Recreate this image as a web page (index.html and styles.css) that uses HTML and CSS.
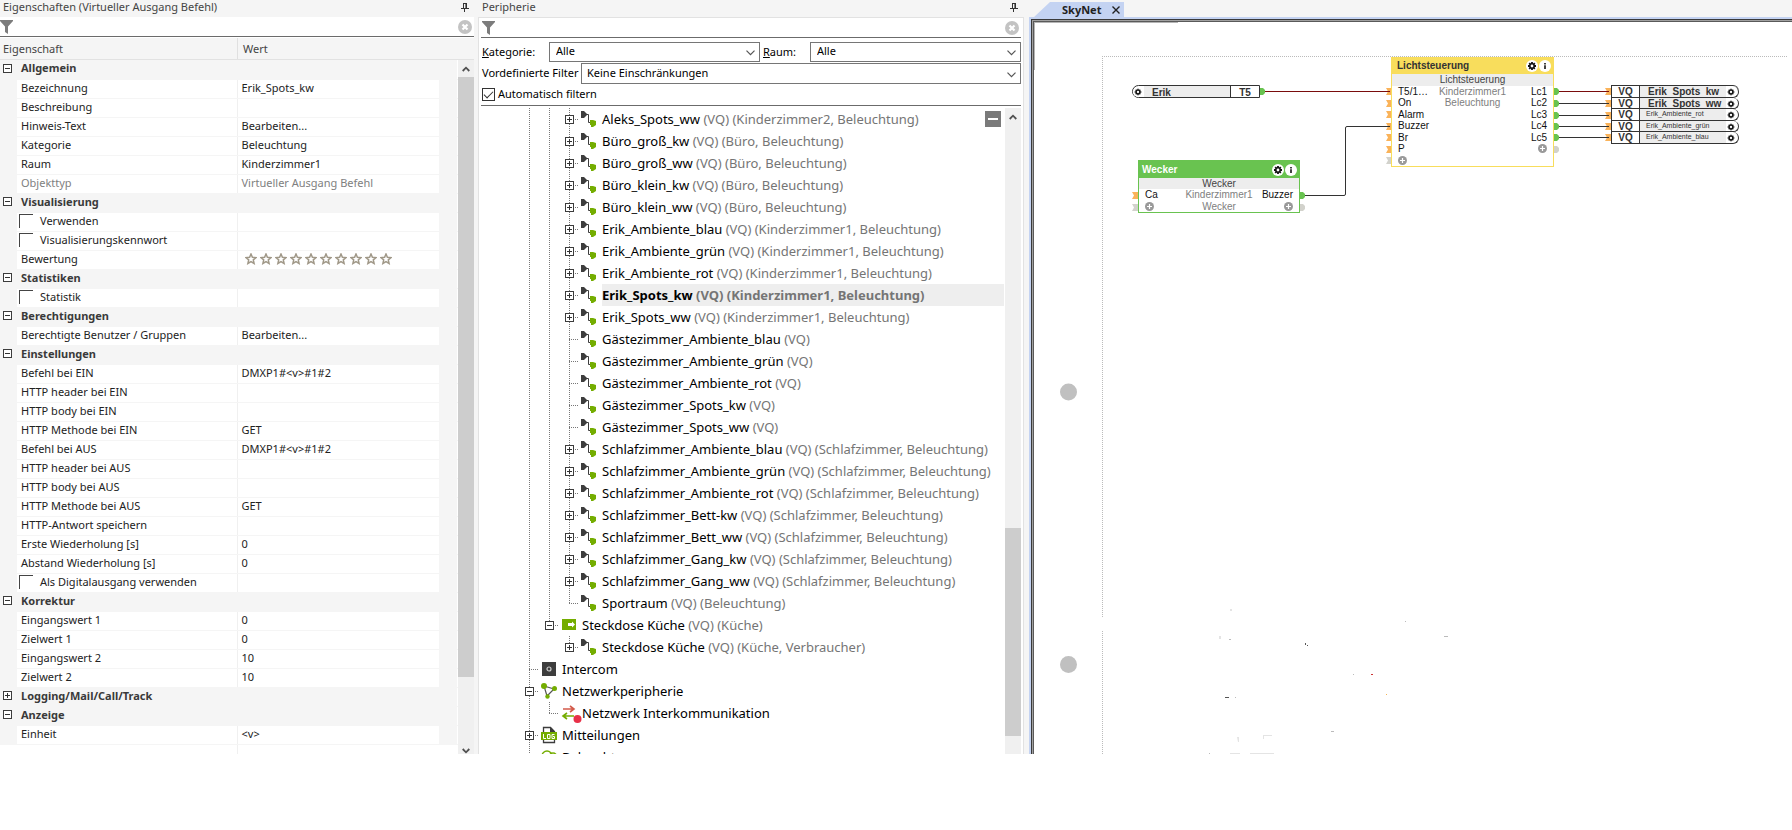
FILE: index.html
```html
<!DOCTYPE html>
<html lang="de">
<head>
<meta charset="utf-8">
<title>SkyNet</title>
<link rel="stylesheet" href="styles.css">
</head>
<body>
<svg class="sprite" aria-hidden="true">
  <symbol id="pin" viewBox="0 0 8 9"><path d="M2 .5h4M2.5 0v5M5.5 0v5M4.9 0v5M0 5.5h8M3.5 6v3" fill="none" stroke="#333"/></symbol>
  <symbol id="funnel" viewBox="0 0 13 14"><path d="M0 0h13v1L8 6.500V14L5 12V6.500L0 1z" fill="#7c7c7c"/></symbol>
  <symbol id="clear" viewBox="0 0 14 14"><circle cx="7" cy="7" r="7" fill="#c3c3c3"/><path d="M4.500 4.500l5 5M9.500 4.500l-5 5" stroke="#fff" stroke-width="2.200"/></symbol>
  <symbol id="star" viewBox="0 0 12 12"><path d="M6 1l1.400 3.300 3.600.3-2.700 2.300.8 3.600L6 8.600l-3.100 1.900.8-3.600L1 4.600l3.600-.3z" fill="#fff" stroke="#a09888" stroke-width="1.500"/></symbol>
  <symbol id="up" viewBox="0 0 8 6"><path d="M.7 5L4 1.700 7.300 5" fill="none" stroke="#505050" stroke-width="1.800"/></symbol>
  <symbol id="down" viewBox="0 0 8 6"><path d="M.7 1L4 4.300 7.300 1" fill="none" stroke="#505050" stroke-width="1.800"/></symbol>
  <symbol id="chev" viewBox="0 0 9 6"><path d="M.5.7l4 4 4-4" fill="none" stroke="#555" stroke-width="1.200"/></symbol>
  <symbol id="vq" viewBox="0 0 20 20"><path d="M2 2h3l3 3v1L5 9H2z" fill="#3d3d3d"/><path d="M8 5.500h1.500v8H12" fill="none" stroke="#3d3d3d"/><path d="M11 11h3l3 1v4l-3 2h-2v-2h-1z" fill="#74ad00"/></symbol>
  <symbol id="box" viewBox="0 0 20 20"><path d="M3 4h14v11H3z" fill="#74ad00"/><path d="M9 8h4V6.500l3 3-3 3V11H9z" fill="#fff"/></symbol>
  <symbol id="intercom" viewBox="0 0 20 20"><path d="M3 3h14v14H3z" fill="#3d3d3d"/><circle cx="10" cy="10" r="2" fill="none" stroke="#ccc" stroke-width="1.200"/></symbol>
  <symbol id="net" viewBox="0 0 20 20"><path d="M5 5l10 3-7 7z" fill="none" stroke="#555" stroke-width="1.200"/><circle cx="5" cy="5" r="3" fill="#74ad00"/><circle cx="15.500" cy="7.500" r="2.500" fill="#74ad00"/><circle cx="8.500" cy="15.500" r="2.200" fill="#74ad00"/></symbol>
  <symbol id="swap" viewBox="0 0 24 20"><path d="M4 6h10M11 3l4 3-4 3" fill="none" stroke="#d35b4b" stroke-width="1.600"/><path d="M15 13H5M8 10l-4 3 4 3" fill="none" stroke="#74ad00" stroke-width="1.600"/><circle cx="18.500" cy="16" r="4" fill="#e83048"/></symbol>
  <symbol id="log" viewBox="0 0 20 20"><path d="M4.500 17.500v-15h7l4 4v11z" fill="#fff" stroke="#3d3d3d" stroke-width="1.300"/><path d="M11 2v5h5z" fill="#3d3d3d"/><path d="M2 7h16v8H2z" fill="#74ad00"/><path d="M4.500 9v4.500H7M8.500 9.500H11v4H8.500zM15.500 9.500H13v4h2.500v-2H14" fill="none" stroke="#fff"/></symbol>
  <symbol id="bulb" viewBox="0 0 20 20"><circle cx="8" cy="9" r="5" fill="none" stroke="#74ad00" stroke-width="1.400"/><circle cx="14" cy="10" r="4" fill="none" stroke="#74ad00" stroke-width="1.400"/></symbol>
  <symbol id="gear" viewBox="0 0 12 12"><circle cx="6" cy="6" r="6" fill="#fff"/><path d="M6 2v8M2 6h8M3.200 3.200l5.600 5.600M8.800 3.200L3.200 8.800" stroke="#111" stroke-width="1.800"/><circle cx="6" cy="6" r="2.700" fill="#111"/><circle cx="6" cy="6" r="1.400" fill="#fff"/></symbol>
  <symbol id="info" viewBox="0 0 12 12"><circle cx="6" cy="6" r="6" fill="#fff"/><path d="M6 3v1.500M6 5.200V9" stroke="#222" stroke-width="1.700"/></symbol>
  <symbol id="add" viewBox="0 0 9 9"><circle cx="4.500" cy="4.500" r="4.500" fill="#999"/><path d="M4.500 2v5M2 4.500h5" stroke="#fff" stroke-width="1.200"/></symbol>
  <symbol id="in" viewBox="0 0 7 7"><path d="M0 0h7v7H0l2-3.500z"/></symbol>
  <symbol id="out" viewBox="0 0 5 7"><path d="M0 0h3l2 2v3L3 7H0z"/></symbol>
</svg>

<main class="app">
  <section class="panel props">
    <header class="title"><h2>Eigenschaften (Virtueller Ausgang Befehl)</h2><button class="icon-btn" aria-label="Anheften"><svg width="8" height="9"><use href="#pin"/></svg></button></header>
    <div class="search"><svg width="13" height="14"><use href="#funnel"/></svg><input type="text" aria-label="Eigenschaften filtern"><button class="icon-btn" aria-label="Filter leeren"><svg width="14" height="14"><use href="#clear"/></svg></button></div>
    <div class="colhead"><span>Eigenschaft</span><span>Wert</span></div>
    <div class="props-body">
      <table class="grid">
        <colgroup><col class="c-gutter"><col class="c-name"><col class="c-value"><col></colgroup>
        <tbody>
        <tr class="cat"><td><button class="exp" aria-label="Allgemein"></button></td><th colspan="3">Allgemein</th></tr>
        <tr><td></td><td>Bezeichnung</td><td>Erik_Spots_kw</td><td></td></tr>
        <tr><td></td><td>Beschreibung</td><td></td><td></td></tr>
        <tr><td></td><td>Hinweis-Text</td><td>Bearbeiten...</td><td></td></tr>
        <tr><td></td><td>Kategorie</td><td>Beleuchtung</td><td></td></tr>
        <tr><td></td><td>Raum</td><td>Kinderzimmer1</td><td></td></tr>
        <tr class="ro"><td></td><td>Objekttyp</td><td>Virtueller Ausgang Befehl</td><td></td></tr>
        <tr class="cat"><td><button class="exp" aria-label="Visualisierung"></button></td><th colspan="3">Visualisierung</th></tr>
        <tr><td></td><td><label class="flag"><input type="checkbox">Verwenden</label></td><td></td><td></td></tr>
        <tr><td></td><td><label class="flag"><input type="checkbox">Visualisierungskennwort</label></td><td></td><td></td></tr>
        <tr><td></td><td>Bewertung</td><td><span class="stars"><svg><use href="#star"/></svg><svg><use href="#star"/></svg><svg><use href="#star"/></svg><svg><use href="#star"/></svg><svg><use href="#star"/></svg><svg><use href="#star"/></svg><svg><use href="#star"/></svg><svg><use href="#star"/></svg><svg><use href="#star"/></svg><svg><use href="#star"/></svg></span></td><td></td></tr>
        <tr class="cat"><td><button class="exp" aria-label="Statistiken"></button></td><th colspan="3">Statistiken</th></tr>
        <tr><td></td><td><label class="flag"><input type="checkbox">Statistik</label></td><td></td><td></td></tr>
        <tr class="cat"><td><button class="exp" aria-label="Berechtigungen"></button></td><th colspan="3">Berechtigungen</th></tr>
        <tr><td></td><td>Berechtigte Benutzer / Gruppen</td><td>Bearbeiten...</td><td></td></tr>
        <tr class="cat"><td><button class="exp" aria-label="Einstellungen"></button></td><th colspan="3">Einstellungen</th></tr>
        <tr><td></td><td>Befehl bei EIN</td><td>DMXP1#&lt;v&gt;#1#2</td><td></td></tr>
        <tr><td></td><td>HTTP header bei EIN</td><td></td><td></td></tr>
        <tr><td></td><td>HTTP body bei EIN</td><td></td><td></td></tr>
        <tr><td></td><td>HTTP Methode bei EIN</td><td>GET</td><td></td></tr>
        <tr><td></td><td>Befehl bei AUS</td><td>DMXP1#&lt;v&gt;#1#2</td><td></td></tr>
        <tr><td></td><td>HTTP header bei AUS</td><td></td><td></td></tr>
        <tr><td></td><td>HTTP body bei AUS</td><td></td><td></td></tr>
        <tr><td></td><td>HTTP Methode bei AUS</td><td>GET</td><td></td></tr>
        <tr><td></td><td>HTTP-Antwort speichern</td><td></td><td></td></tr>
        <tr><td></td><td>Erste Wiederholung [s]</td><td>0</td><td></td></tr>
        <tr><td></td><td>Abstand Wiederholung [s]</td><td>0</td><td></td></tr>
        <tr><td></td><td><label class="flag"><input type="checkbox">Als Digitalausgang verwenden</label></td><td></td><td></td></tr>
        <tr class="cat"><td><button class="exp" aria-label="Korrektur"></button></td><th colspan="3">Korrektur</th></tr>
        <tr><td></td><td>Eingangswert 1</td><td>0</td><td></td></tr>
        <tr><td></td><td>Zielwert 1</td><td>0</td><td></td></tr>
        <tr><td></td><td>Eingangswert 2</td><td>10</td><td></td></tr>
        <tr><td></td><td>Zielwert 2</td><td>10</td><td></td></tr>
        <tr class="cat"><td><button class="exp plus" aria-label="Logging/Mail/Call/Track"></button></td><th colspan="3">Logging/Mail/Call/Track</th></tr>
        <tr class="cat"><td><button class="exp" aria-label="Anzeige"></button></td><th colspan="3">Anzeige</th></tr>
        <tr><td></td><td>Einheit</td><td>&lt;v&gt;</td><td></td></tr>
        <tr class="blank"><td></td><td></td><td></td><td></td></tr>
        </tbody>
      </table>
      <div class="scroll"><svg class="arrow" width="8" height="6"><use href="#up"/></svg><div class="track"><div class="thumb thumb-props"></div></div><svg class="arrow-end" width="8" height="6"><use href="#down"/></svg></div>
    </div>
  </section>

  <section class="panel periph">
    <header class="title"><h2>Peripherie</h2><button class="icon-btn" aria-label="Anheften"><svg width="8" height="9"><use href="#pin"/></svg></button></header>
    <div class="periph-body">
      <div class="search"><svg width="13" height="14"><use href="#funnel"/></svg><input type="text" aria-label="Peripherie filtern"><button class="icon-btn" aria-label="Filter leeren"><svg width="14" height="14"><use href="#clear"/></svg></button></div>
      <div class="filters">
        <div class="frow"><label class="lab-kat" for="kat"><u>K</u>ategorie:</label><span class="drop"><select id="kat"><option>Alle</option></select><svg width="9" height="6"><use href="#chev"/></svg></span><label class="lab-raum" for="raum"><u>R</u>aum:</label><span class="drop"><select id="raum"><option>Alle</option></select><svg width="9" height="6"><use href="#chev"/></svg></span></div>
        <div class="frow"><label class="lab-vor" for="vor">Vordefinierte Filter</label><span class="drop tall"><select id="vor"><option>Keine Einschränkungen</option></select><svg width="9" height="6"><use href="#chev"/></svg></span></div>
        <label class="auto"><input type="checkbox" checked>Automatisch filtern</label>
      </div>
      <div class="tree-area">
        <ul class="tree">
          <li><i class="v"></i><i class="v"></i><i class="v h"><button class="exp plus"></button></i><svg><use href="#vq"/></svg><span>Aleks_Spots_ww <em>(VQ) (Kinderzimmer2, Beleuchtung)</em></span></li>
          <li><i class="v"></i><i class="v"></i><i class="v h"><button class="exp plus"></button></i><svg><use href="#vq"/></svg><span>Büro_groß_kw <em>(VQ) (Büro, Beleuchtung)</em></span></li>
          <li><i class="v"></i><i class="v"></i><i class="v h"><button class="exp plus"></button></i><svg><use href="#vq"/></svg><span>Büro_groß_ww <em>(VQ) (Büro, Beleuchtung)</em></span></li>
          <li><i class="v"></i><i class="v"></i><i class="v h"><button class="exp plus"></button></i><svg><use href="#vq"/></svg><span>Büro_klein_kw <em>(VQ) (Büro, Beleuchtung)</em></span></li>
          <li><i class="v"></i><i class="v"></i><i class="v h"><button class="exp plus"></button></i><svg><use href="#vq"/></svg><span>Büro_klein_ww <em>(VQ) (Büro, Beleuchtung)</em></span></li>
          <li><i class="v"></i><i class="v"></i><i class="v h"><button class="exp plus"></button></i><svg><use href="#vq"/></svg><span>Erik_Ambiente_blau <em>(VQ) (Kinderzimmer1, Beleuchtung)</em></span></li>
          <li><i class="v"></i><i class="v"></i><i class="v h"><button class="exp plus"></button></i><svg><use href="#vq"/></svg><span>Erik_Ambiente_grün <em>(VQ) (Kinderzimmer1, Beleuchtung)</em></span></li>
          <li><i class="v"></i><i class="v"></i><i class="v h"><button class="exp plus"></button></i><svg><use href="#vq"/></svg><span>Erik_Ambiente_rot <em>(VQ) (Kinderzimmer1, Beleuchtung)</em></span></li>
          <li class="sel"><i class="v"></i><i class="v"></i><i class="v h"><button class="exp plus"></button></i><svg><use href="#vq"/></svg><span>Erik_Spots_kw <em>(VQ) (Kinderzimmer1, Beleuchtung)</em></span></li>
          <li><i class="v"></i><i class="v"></i><i class="v h"><button class="exp plus"></button></i><svg><use href="#vq"/></svg><span>Erik_Spots_ww <em>(VQ) (Kinderzimmer1, Beleuchtung)</em></span></li>
          <li><i class="v"></i><i class="v"></i><i class="v h"></i><svg><use href="#vq"/></svg><span>Gästezimmer_Ambiente_blau <em>(VQ)</em></span></li>
          <li><i class="v"></i><i class="v"></i><i class="v h"></i><svg><use href="#vq"/></svg><span>Gästezimmer_Ambiente_grün <em>(VQ)</em></span></li>
          <li><i class="v"></i><i class="v"></i><i class="v h"></i><svg><use href="#vq"/></svg><span>Gästezimmer_Ambiente_rot <em>(VQ)</em></span></li>
          <li><i class="v"></i><i class="v"></i><i class="v h"></i><svg><use href="#vq"/></svg><span>Gästezimmer_Spots_kw <em>(VQ)</em></span></li>
          <li><i class="v"></i><i class="v"></i><i class="v h"></i><svg><use href="#vq"/></svg><span>Gästezimmer_Spots_ww <em>(VQ)</em></span></li>
          <li><i class="v"></i><i class="v"></i><i class="v h"><button class="exp plus"></button></i><svg><use href="#vq"/></svg><span>Schlafzimmer_Ambiente_blau <em>(VQ) (Schlafzimmer, Beleuchtung)</em></span></li>
          <li><i class="v"></i><i class="v"></i><i class="v h"><button class="exp plus"></button></i><svg><use href="#vq"/></svg><span>Schlafzimmer_Ambiente_grün <em>(VQ) (Schlafzimmer, Beleuchtung)</em></span></li>
          <li><i class="v"></i><i class="v"></i><i class="v h"><button class="exp plus"></button></i><svg><use href="#vq"/></svg><span>Schlafzimmer_Ambiente_rot <em>(VQ) (Schlafzimmer, Beleuchtung)</em></span></li>
          <li><i class="v"></i><i class="v"></i><i class="v h"><button class="exp plus"></button></i><svg><use href="#vq"/></svg><span>Schlafzimmer_Bett-kw <em>(VQ) (Schlafzimmer, Beleuchtung)</em></span></li>
          <li><i class="v"></i><i class="v"></i><i class="v h"><button class="exp plus"></button></i><svg><use href="#vq"/></svg><span>Schlafzimmer_Bett_ww <em>(VQ) (Schlafzimmer, Beleuchtung)</em></span></li>
          <li><i class="v"></i><i class="v"></i><i class="v h"><button class="exp plus"></button></i><svg><use href="#vq"/></svg><span>Schlafzimmer_Gang_kw <em>(VQ) (Schlafzimmer, Beleuchtung)</em></span></li>
          <li><i class="v"></i><i class="v"></i><i class="v h"><button class="exp plus"></button></i><svg><use href="#vq"/></svg><span>Schlafzimmer_Gang_ww <em>(VQ) (Schlafzimmer, Beleuchtung)</em></span></li>
          <li><i class="v"></i><i class="v"></i><i class="v h last"></i><svg><use href="#vq"/></svg><span>Sportraum <em>(VQ) (Beleuchtung)</em></span></li>
          <li><i class="v"></i><i class="v h last"><button class="exp"></button></i><svg><use href="#box"/></svg><span>Steckdose Küche <em>(VQ) (Küche)</em></span></li>
          <li><i class="v"></i><i></i><i class="v h last"><button class="exp plus"></button></i><svg><use href="#vq"/></svg><span>Steckdose Küche <em>(VQ) (Küche, Verbraucher)</em></span></li>
          <li><i class="v h"></i><svg><use href="#intercom"/></svg><span>Intercom</span></li>
          <li><i class="v h"><button class="exp"></button></i><svg><use href="#net"/></svg><span>Netzwerkperipherie</span></li>
          <li><i class="v"></i><i class="v h last"></i><svg><use href="#swap" width="24"/></svg><span>Netzwerk Interkommunikation</span></li>
          <li><i class="v h"><button class="exp plus"></button></i><svg><use href="#log"/></svg><span>Mitteilungen</span></li>
          <li><i class="v"></i><svg><use href="#bulb"/></svg><span>Beleuchtung</span></li>
        </ul>
        <button class="collapse" aria-label="Alle zuklappen"></button>
        <div class="scroll"><svg class="arrow" width="8" height="6"><use href="#up"/></svg><div class="track"><div class="thumb thumb-tree"></div></div></div>
      </div>
    </div>
  </section>

  <section class="editor">
    <div class="tabs"><div class="tab"><span>SkyNet</span><button class="icon-btn" aria-label="Schließen"><svg width="8" height="8" viewBox="0 0 8 8"><path d="M.5.5l7 7M7.500.5l-7 7" stroke="#222" stroke-width="1.400"/></svg></button></div></div>
    <div class="frame"><div class="canvas">
      <svg class="wires" width="758" height="732" viewBox="1034 22 758 732">
        <path d="M1034 22.500h144M1034.500 22v48" stroke="#b5b5b5"/>
        <path d="M1102.500 56v562M1102.500 631v123M1102 56.500h686" stroke="#bbb" stroke-dasharray="1 1" fill="none"/>
        <g fill="#c0c0c0"><circle cx="1068.500" cy="392" r="8.500"/><circle cx="1068.500" cy="664.500" r="8.500"/></g>
        <g stroke-width="1" fill="none" stroke="#333"><path d="M1304 195.500h40q1.500 0 1.500-1.500v-66q0-1.500 1.500-1.500h42"/><path d="M1559 103.500h50M1559 115.500h50M1559 126.500h50M1559 137.500h50"/><path stroke="#7a0c0c" d="M1265 91.500h124M1559 91.500h50"/></g>
        <g fill="#555"><path d="M1225 697h4v1h-4zM1305 643h1v2h-1zM1307 645h1v1h-1z"/><path fill="#c33" d="M1371 674h2v1h-2z"/><path fill="#f5b555" d="M1386 694h1v1h-1z"/><path fill="#bbb" d="M1229 639h2v1h-2zM1331 731h3v1h-3zM1235 697h1v1h-1zM1353 674h1v1h-1zM1405 621h1v1h-1zM1209 753h1v1h-1zM1444 636h4v1h-4z"/><path fill="#e4e4e4" d="M1263 735h9v1h-8v3h-1zM1237 737h2v5h-1zM1250 753h24v1h-24zM1230 753h10v1h-10zM1230 609h2v2h-2zM1219 636h2v3h-2z"/></g>
        <g fill="#fab35a"><use href="#in" x="1386" y="88" width="7" height="7"/><use href="#in" x="1386" y="100" width="7" height="7"/><use href="#in" x="1386" y="111" width="7" height="7"/><use href="#in" x="1386" y="123" width="7" height="7"/><use href="#in" x="1386" y="134" width="7" height="7"/><use href="#in" x="1386" y="146" width="7" height="7"/><use href="#in" x="1132" y="192" width="7" height="7"/><use href="#in" x="1605" y="88" width="7" height="7"/><use href="#in" x="1605" y="100" width="7" height="7"/><use href="#in" x="1605" y="112" width="7" height="7"/><use href="#in" x="1605" y="123" width="7" height="7"/><use href="#in" x="1605" y="134" width="7" height="7"/></g>
        <path d="M1386 91.500h4M1605 91.500h4" stroke="#7a0c0c"/><path d="M1386 126.500h4M1605 103.500h4M1605 115.500h4M1605 126.500h4M1605 137.500h4" stroke="#333"/>
        <g fill="#d2d2cc"><use href="#in" x="1386" y="157" width="7" height="7"/><use href="#in" x="1132" y="204" width="7" height="7"/><use href="#out" x="1554" y="146" width="5" height="7"/><use href="#out" x="1300" y="204" width="5" height="7"/></g>
        <g fill="#69c350"><use href="#out" x="1260" y="88" width="5" height="7"/><use href="#out" x="1300" y="192" width="5" height="7"/><use href="#out" x="1554" y="88" width="5" height="7"/><use href="#out" x="1554" y="100" width="5" height="7"/><use href="#out" x="1554" y="112" width="5" height="7"/><use href="#out" x="1554" y="123" width="5" height="7"/><use href="#out" x="1554" y="134" width="5" height="7"/></g>
      </svg>
      <div class="input-ref"><svg width="10" height="10"><use href="#gear"/></svg><b>Erik</b><strong>T5</strong></div>
      <article class="block wecker">
        <header><h3>Wecker</h3><svg width="12" height="12"><use href="#gear"/></svg><svg width="12" height="12"><use href="#info"/></svg></header>
        <div class="io io-3">
          <p class="name">Wecker</p>
          <span>Ca</span><span class="mid">Kinderzimmer1</span><span class="r">Buzzer</span>
          <span><svg width="9" height="9"><use href="#add"/></svg></span><span class="mid">Wecker</span><span class="r"><svg width="9" height="9"><use href="#add"/></svg></span>
        </div>
      </article>
      <article class="block licht">
        <header><h3>Lichtsteuerung</h3><svg width="12" height="12"><use href="#gear"/></svg><svg width="12" height="12"><use href="#info"/></svg></header>
        <div class="io io-8">
          <p class="name">Lichtsteuerung</p>
          <span>T5/1…</span><span class="mid">Kinderzimmer1</span><span class="r">Lc1</span>
          <span>On</span><span class="mid">Beleuchtung</span><span class="r">Lc2</span>
          <span>Alarm</span><span></span><span class="r">Lc3</span>
          <span>Buzzer</span><span></span><span class="r">Lc4</span>
          <span>Br</span><span></span><span class="r">Lc5</span>
          <span>P</span><span></span><span class="r"><svg width="9" height="9"><use href="#add"/></svg></span>
          <span><svg width="9" height="9"><use href="#add"/></svg></span><span></span><span></span>
        </div>
      </article>
      <ul class="outputs">
        <li><strong>VQ</strong><b>Erik&nbsp; Spots&nbsp; kw</b><svg width="10" height="10"><use href="#gear"/></svg></li>
        <li><strong>VQ</strong><b>Erik&nbsp; Spots&nbsp; ww</b><svg width="10" height="10"><use href="#gear"/></svg></li>
        <li><strong>VQ</strong><small>Erik_Ambiente_rot</small><svg width="10" height="10"><use href="#gear"/></svg></li>
        <li><strong>VQ</strong><small>Erik_Ambiente_grün</small><svg width="10" height="10"><use href="#gear"/></svg></li>
        <li><strong>VQ</strong><small>Erik_Ambiente_blau</small><svg width="10" height="10"><use href="#gear"/></svg></li>
      </ul>
    </div></div>
  </section>
</main>
</body>
</html>
```
FILE: styles.css
```css
* { box-sizing: border-box; }
body {
  margin: 0;
  height: 100vh;
  padding-bottom: 76px;
  overflow: hidden;
  background: #fff;
  color: #222;
  font: 11px/18px "Noto Sans", "Open Sans", sans-serif;
}
h2, h3, p, ul { margin: 0; padding: 0; font-size: inherit; font-weight: normal; list-style: none; }
button, input, select { font: inherit; color: inherit; margin: 0; padding: 0; border: 0; background: none; border-radius: 0; }
.sprite { position: absolute; width: 0; height: 0; }
svg { display: block; flex: none; }

.app { display: grid; grid-template-columns: 478px 551px minmax(0, 1fr); height: 100%; overflow: hidden; }
.panel { display: flex; flex-direction: column; min-width: 0; min-height: 0; background: #f5f5f5; }
.title { display: flex; align-items: center; justify-content: space-between; height: 17px; padding: 0 9px 3px 3px; line-height: 14px; color: #444; flex: none; }
.icon-btn { display: block; flex: none; }
.search { display: flex; align-items: center; height: 20px; background: #fff; border-bottom: 1px solid #6b6b6b; flex: none; }
.search input { flex: 1; min-width: 0; height: 18px; outline: 0; }

/* properties */
.props > .search { margin-right: 4px; padding-right: 2px; }
.colhead { display: grid; grid-template-columns: 238px 1fr; height: 23px; margin: 0 4px 0 0; border-top: 1px solid #fff; border-bottom: 1px solid #e2e2e2; line-height: 21px; color: #444; flex: none; }
.colhead span { padding-left: 3px; }
.colhead span:first-child { border-right: 1px solid #e0e0e0; }
.colhead span:last-child { padding-left: 5px; }
.props-body { display: flex; flex: 1; min-height: 0; overflow: hidden; margin-right: 4px; }
.grid { flex: 1; table-layout: fixed; border-collapse: collapse; border-right: 1px solid #fff; align-self: flex-start; }
.c-gutter { width: 17px; }
.c-name { width: 220px; }
.c-value { width: 202px; }
.grid tr { height: 19px; }
.grid td, .grid th { padding: 0 0 2px 4px; height: 19px; line-height: 16px; text-align: left; white-space: nowrap; border-bottom: 1px solid #f5f5f5; }
.grid td:first-child { padding-left: 3px; }
.grid td:nth-child(2), .grid td:nth-child(3) { background: #fff; }
.grid td:nth-child(2) { border-right: 1px solid #f0f0f0; }
.grid .ro td { color: #808080; }
.grid .cat th { color: #3a3a3a; font-weight: bold; }
.grid .blank td { background: #fff; }
.exp { position: relative; display: block; width: 9px; height: 9px; border: 1px solid #3c3c3c; background: linear-gradient(#333, #333) center / 5px 1px no-repeat #fff; }
.exp.plus { background: linear-gradient(#333, #333) center / 5px 1px no-repeat, linear-gradient(#333, #333) center / 1px 5px no-repeat #fff; }
.flag { display: flex; align-items: center; margin-left: -2px; height: 16px; }
.flag input { appearance: none; width: 14px; height: 14px; margin-right: 7px; border: solid #444; border-width: 1px 0 0 1px; }
.stars { display: flex; gap: 3px; padding-left: 3px; }
.stars svg { width: 12px; height: 12px; }

.scroll { display: flex; flex-direction: column; width: 16px; background: #f0f0f0; flex: none; overflow: hidden; }
.arrow { margin: 6px 4px 5px; }
.arrow-end { margin: 4px 4px 0; }
.track { flex: 1; display: flex; flex-direction: column; }
.thumb { background: #cdcdcd; }
.thumb-props { height: 90%; }
.thumb-tree { height: 33%; margin-top: auto; margin-bottom: 18px; }

/* periphery */
.periph .title { padding: 0 11px 3px 4px; }
.periph-body { display: flex; flex-direction: column; flex: 1; min-height: 0; margin-right: 5px; padding: 2px 2px 0; background: #fff; border: 1px solid #e2e2e2; border-bottom: 0; }
.periph .search { height: 18px; padding: 0 2px 1px 1px; }
.periph .search input { height: 16px; }
.filters { display: flex; flex-direction: column; gap: 1px; padding: 4px 0 2px 1px; color: #000; border-bottom: 1px solid #6b6b6b; }
.frow { display: flex; align-items: center; }
.frow label { padding-bottom: 1px; }
.lab-kat { width: 67px; }
.lab-raum { width: 50px; padding-left: 3px; }
.lab-vor { width: 99px; white-space: nowrap; }
.drop { position: relative; flex: 1; display: flex; height: 20px; }
.drop.tall { height: 21px; }
.drop select { appearance: none; width: 100%; padding: 0 0 2px 6px; border: 1px solid #767676; background: #fff; line-height: 16px; }
.drop.tall select { padding-left: 5px; }
.drop svg { position: absolute; right: 5px; top: 50%; margin-top: -2px; }
.auto { display: flex; align-items: center; height: 18px; }
.auto input { appearance: none; width: 13px; height: 13px; margin-right: 3px; border: 1px solid #333; display: grid; place-items: center; }
.auto input:checked::before { content: ""; width: 8px; height: 4px; border: solid #333; border-width: 0 0 1px 1px; transform: translateY(-1px) rotate(-45deg); }
.tree-area { position: relative; display: flex; flex: 1; min-height: 0; padding-top: 2px; overflow: hidden; }
.tree { flex: 1; padding-left: 38px; overflow: hidden; font-size: 13px; color: #000; }
.tree li { display: flex; align-items: center; height: 22px; line-height: 22px; white-space: nowrap; }
.tree i { position: relative; display: grid; place-items: center; width: 20px; height: 22px; flex: none; }
.tree .v { background: repeating-linear-gradient(#777 0 1px, transparent 1px 2px) 10px 0 / 1px 100% no-repeat; }
.tree .h { background: repeating-linear-gradient(#777 0 1px, transparent 1px 2px) 10px 0 / 1px 100% no-repeat, repeating-linear-gradient(90deg, #777 0 1px, transparent 1px 2px) 10px 11px / 10px 1px no-repeat; }
.tree .last { background-size: 1px 11px, 10px 1px; }
.tree li > svg { width: 20px; height: 20px; overflow: visible; }
.tree li > span { flex: 1; padding-left: 3px; }
.tree em { font-style: normal; color: #757575; }
.tree .sel span { font-weight: bold; background: linear-gradient(#eee, #eee) 3px 0 / calc(100% - 4px) 100% no-repeat; }
.collapse { position: absolute; right: 20px; top: 5px; width: 16px; height: 16px; background: linear-gradient(#fff, #fff) center / 10px 2px no-repeat #7a7a7a; }

/* editor */
.editor { display: flex; flex-direction: column; min-width: 0; min-height: 0; }
.tabs { height: 17px; padding: 1px 0 0 4px; background: #f5f5f5; flex: none; }
.tab { display: inline-flex; align-items: center; gap: 11px; height: 16px; padding: 0 4px 1px 29px; background: #c4d3f2; clip-path: polygon(17px 0, 100% 0, 100% 100%, 0 100%); font-weight: bold; line-height: 15px; }
.frame { display: flex; flex: 1; min-height: 0; overflow: hidden; border: solid #c4d3f2; border-width: 2px 0 0 2px; }
.canvas { position: relative; flex: 1; min-width: 0; margin: 3px 0 0 3px; overflow: hidden; box-shadow: 0 0 0 1px #5a5a5a, 0 0 0 2px #a0a0a0, 0 0 0 3px #3a3a3a; background: #fff; font: 10px/12px "Liberation Sans", Arial, sans-serif; color: #111; }
.wires { position: absolute; left: 0; top: 0; }
.block { position: absolute; display: flex; flex-direction: column; background: #fff; }
.block header { display: flex; align-items: center; gap: 1px; font-weight: bold; flex: none; }
.block h3 { flex: 1; font-weight: bold; }
.wecker { left: 104px; top: 138px; width: 162px; height: 53px; border: 1px solid #69c350; }
.wecker header { height: 17px; padding: 0 2px 0 3px; background: #69c350; color: #fff; }
.licht { left: 357px; top: 35px; width: 163px; height: 110px; border: 1px solid #f8dd5c; }
.licht header { height: 16px; padding: 0 2px 0 5px; background: #f8dd5c; color: #333; }
.io { flex: 1; min-height: 0; display: grid; grid-template-columns: 1fr auto 1fr; align-items: center; }
.io-3 { grid-template-rows: repeat(3, minmax(0, 1fr)); }
.io-8 { grid-template-rows: repeat(8, minmax(0, 1fr)); }
.io span { padding: 0 6px; line-height: 11px; }
.io .mid { color: #808080; padding: 0; text-align: center; }
.io .name { grid-column: 1 / -1; align-self: stretch; background: #ededed; text-align: center; line-height: 12px; color: #444; }
.io .r { display: flex; justify-content: flex-end; }
.input-ref { position: absolute; left: 98px; top: 63px; width: 128px; height: 13px; display: grid; grid-template-columns: 11px 1fr 29px; align-items: center; border: 1px solid #333; border-radius: 7px 0 0 7px; background: #fff; line-height: 13px; color: #333; }
.input-ref b { height: 11px; line-height: 13px; padding-left: 8px; background: #ededed; }
.input-ref strong { height: 11px; border-left: 1px solid #333; text-align: center; }
.outputs { position: absolute; left: 577px; top: 63px; width: 128px; height: 59px; display: grid; grid-template-rows: repeat(5, minmax(0, 1fr)); color: #333; border-top: 1px solid #333; border-radius: 0 6px 6px 0; }
.outputs li { display: grid; grid-template-columns: 28px 1fr 12px; align-items: center; border: solid #333; border-width: 0 1px 1px; border-radius: 0 6px 6px 0; background: #fff; overflow: hidden; }
.outputs strong { height: 100%; border-right: 1px solid #333; text-align: center; line-height: 12px; }
.outputs b, .outputs small { height: 100%; background: #ededed; padding-left: 8px; line-height: 12px; white-space: nowrap; }
.outputs small { font-size: 7px; padding-left: 6px; line-height: 10px; }
```
